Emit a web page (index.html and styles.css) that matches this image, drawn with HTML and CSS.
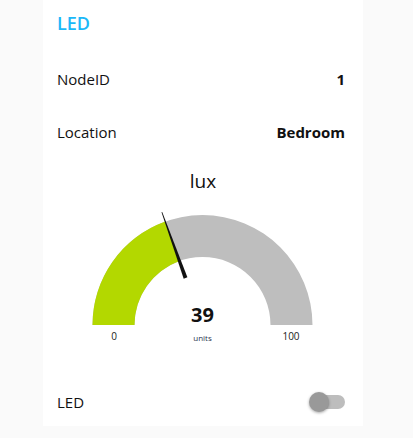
FILE: index.html
```html
<!DOCTYPE html>
<html>
<head>
<meta charset="utf-8">
<link rel="stylesheet" href="styles.css">
</head>
<body>
<div class="card">
  <div class="title">LED</div>
  <div class="row row-first"><span class="label">NodeID</span><span class="value">1</span></div>
  <div class="row"><span class="label">Location</span><span class="value">Bedroom</span></div>
  <div class="gauge-title">lux</div>
  <svg class="gauge" width="320" height="145" viewBox="0 0 320 145">
    <path d="M 49.5 125 A 110 110 0 0 1 269.5 125 L 227.5 125 A 68 68 0 0 0 91.5 125 Z" fill="#bebebe"/>
    <path d="M 49.5 125 A 110 110 0 0 1 122.24 21.5 L 136.47 61.02 A 68 68 0 0 0 91.5 125 Z" fill="#b3d800"/>
    <polygon points="118.5,12.3 119.2,12.0 144.4,77.3 140.7,78.7" fill="#111"/>
    <text x="159.5" y="122" class="g-value">39</text>
    <text x="159.5" y="141" class="g-units">units</text>
    <text x="71" y="140" class="g-range">0</text>
    <text x="248" y="140" class="g-range">100</text>
  </svg>
  <div class="row row-switch"><span class="label">LED</span>
    <span class="switch"><span class="track"></span><span class="thumb"></span></span>
  </div>
</div>
</body>
</html>
```
FILE: styles.css
```css
html, body {
  margin: 0;
  padding: 0;
  background: #fafafa;
}
body {
  font-family: "Open Sans", "Noto Sans", sans-serif;
  color: #111;
}
.card {
  margin-left: 43px;
  width: 320px;
  height: 426px;
  background: #fff;
  display: flex;
  flex-direction: column;
}
.title {
  height: 46px;
  display: flex;
  align-items: center;
  padding-left: 14px;
  font-size: 18px;
  font-weight: 600;
  color: #1bb8f8;
}
.row {
  height: 53px;
  display: flex;
  align-items: center;
  justify-content: space-between;
  padding: 0 18px 0 14px;
  font-size: 15px;
}
.row-first {
  margin-top: 7px;
  height: 52px;
}
.value {
  font-weight: bold;
}
.gauge-title {
  height: 42px;
  display: flex;
  align-items: flex-end;
  justify-content: center;
  font-size: 19px;
  line-height: 26px;
  padding-bottom: 6px;
  box-sizing: border-box;
}
.gauge {
  display: block;
}
.g-value {
  font-weight: bold;
  font-size: 20px;
  text-anchor: middle;
  fill: #111;
}
.g-units {
  font-size: 8px;
  text-anchor: middle;
  fill: #2a3550;
}
.g-range {
  font-size: 10px;
  text-anchor: middle;
  fill: #222;
}
.row-switch {
  margin-top: 33px;
  height: 48px;
}
.switch {
  position: relative;
  width: 36px;
  height: 20px;
  display: block;
}
.track {
  position: absolute;
  left: 2px;
  right: 0;
  top: 3px;
  height: 14px;
  border-radius: 7px;
  background: #bdbdbd;
}
.thumb {
  position: absolute;
  left: 0;
  top: 0;
  width: 20px;
  height: 20px;
  border-radius: 50%;
  background: #999;
  box-shadow: 0 1px 3px rgba(0,0,0,0.35);
}
```
